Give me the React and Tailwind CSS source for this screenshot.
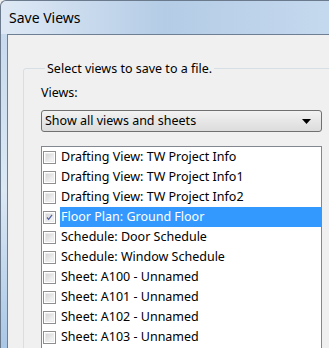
import React from "react";

const items = [
  "Drafting View: TW Project Info",
  "Drafting View: TW Project Info1",
  "Drafting View: TW Project Info2",
  "Floor Plan: Ground Floor",
  "Schedule: Door Schedule",
  "Schedule: Window Schedule",
  "Sheet: A100 - Unnamed",
  "Sheet: A101 - Unnamed",
  "Sheet: A102 - Unnamed",
  "Sheet: A103 - Unnamed",
];

function Check({ checked }) {
  return (
    <div className="w-[13px] h-[13px] border border-[#8f8f8f] bg-white p-[1px] shrink-0">
      <div className="w-full h-full bg-gradient-to-br from-[#d6d6d6] to-[#f7f7f7] border border-[#ececec] flex items-center justify-center">
        {checked && (
          <svg width="11" height="11" viewBox="0 0 11 11">
            <path d="M1.5 5.5 L4.2 8.5 L9.5 1.5" fill="none" stroke="#4b5aa6" strokeWidth="1.8" />
          </svg>
        )}
      </div>
    </div>
  );
}

export default function App() {
  return (
    <div
      className="w-[329px] h-[348px] overflow-hidden bg-[#f0f0f0] flex flex-col"
      style={{ fontFamily: '"Noto Sans", "DejaVu Sans", sans-serif' }}
    >
      <div className="h-[34px] shrink-0 rounded-tl-[6px] border-t border-l border-[#6b7a8c] bg-gradient-to-r from-[#dfe9f5] via-[#b4cce6] to-[#c5d9ee] flex items-center pl-[8px] pt-[1px]">
        <span className="text-[14px] text-black leading-none">Save Views</span>
      </div>
      <div className="flex flex-1 min-h-0">
        <div className="w-[7px] shrink-0 bg-gradient-to-b from-[#c7daee] via-[#dce8f4] to-[#a9c7e6] border-l border-[#6b7a8c]" />
        <div className="flex-1 min-w-0 border-l border-t border-[#6e7f93] bg-[#f0f0f0] pt-[26px] pl-[15px]">
          <fieldset className="border border-[#d5dfe5] rounded-[3px] pl-[17px] pr-0 pb-4 mr-[-20px]">
            <legend className="ml-[4px] px-[2px] text-[12.5px] leading-[15px] text-black">
              Select views to save to a file.
            </legend>
            <div className="text-[12.5px] text-black leading-[15px] mt-[9px]">Views:</div>
            <div className="mt-[10px] w-[281px] h-[22px] rounded-[3px] border border-[#707070] bg-gradient-to-b from-[#f2f2f2] to-[#dcdcdc] flex items-center pl-[3px] pr-[10px] justify-between">
              <span className="text-[12.5px] text-black leading-none">Show all views and sheets</span>
              <svg width="9" height="5" viewBox="0 0 9 5">
                <path d="M0 0 H9 L4.5 5 Z" fill="#000" />
              </svg>
            </div>
            <div className="mt-[14px] w-[281px] h-[220px] border border-[#828790] bg-white">
              {items.map((t, i) => (
                <div key={t} className="h-[20px] flex items-center pl-[1px]">
                  <Check checked={i === 3} />
                  <div
                    className={
                      "ml-[4px] flex-1 h-[20px] flex items-center pl-[1px] text-[12.5px] leading-none " +
                      (i === 3 ? "bg-[#3399ff] text-white" : "text-black")
                    }
                  >
                    {t}
                  </div>
                </div>
              ))}
            </div>
          </fieldset>
        </div>
      </div>
    </div>
  );
}
